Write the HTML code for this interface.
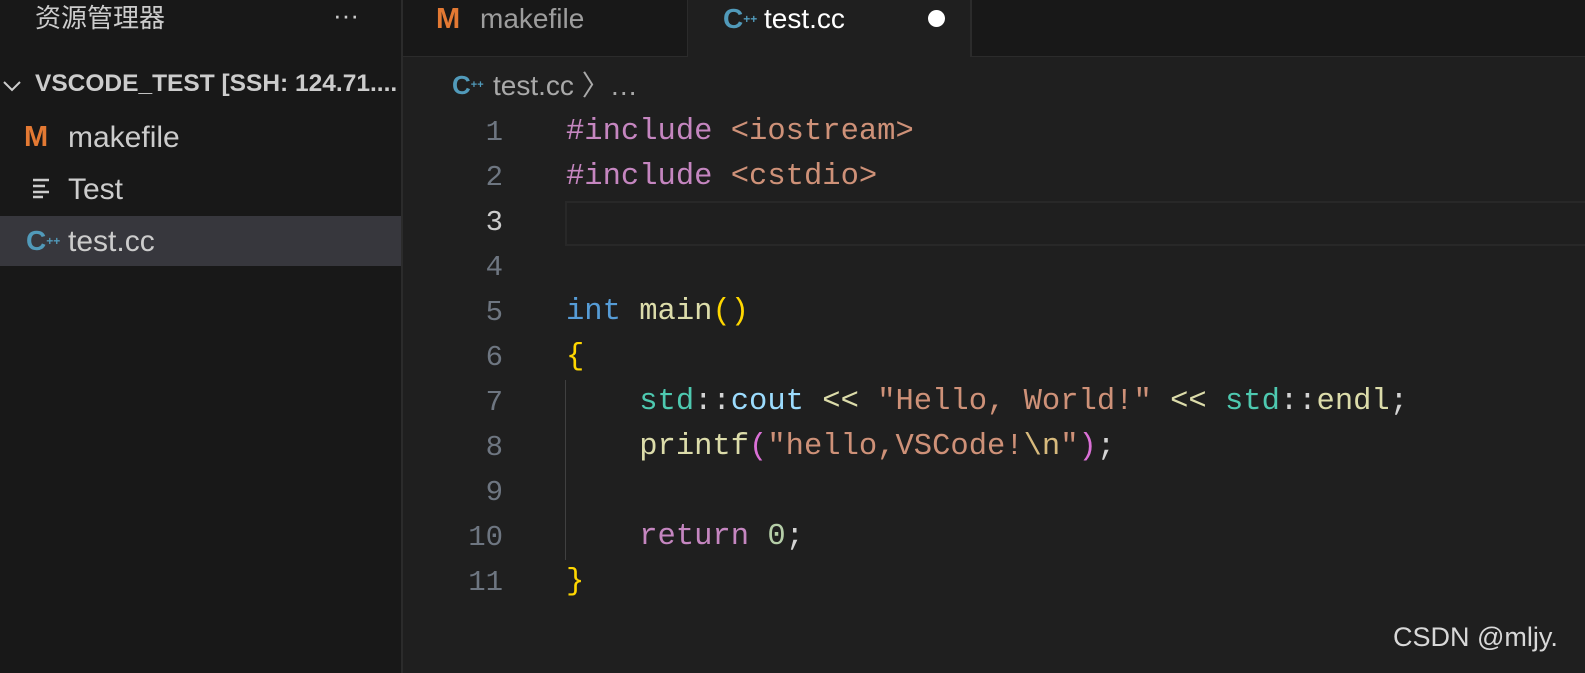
<!DOCTYPE html>
<html><head><meta charset="utf-8"><style>
body{margin:0;width:1585px;height:673px;background:#1f1f1f;overflow:hidden;position:relative;font-family:"Liberation Sans","Noto Sans CJK SC",sans-serif;}
.side{position:absolute;left:0;top:0;width:401px;height:673px;background:#181818;border-right:2px solid #2b2b2b;}
.tabs{position:absolute;left:403px;top:0;right:0;height:56px;background:#181818;border-bottom:1px solid #2b2b2b;}
.tab{position:absolute;top:0;height:56px;color:#9d9d9d;font-size:28px;line-height:38px;}
.abs{position:absolute;}
.code{position:absolute;left:566px;top:0;font-family:"Liberation Mono",monospace;font-size:30.5px;color:#d4d4d4;white-space:pre;}
.ln{position:absolute;left:420px;width:83px;text-align:right;font-family:"Liberation Mono",monospace;font-size:29px;color:#6e7681;}
.l{position:absolute;height:45px;line-height:45px;}
.p{color:#c586c0}.s{color:#ce9178}.k{color:#569cd6}.f{color:#dcdcaa}.g{color:#ffd700}.m{color:#da70d6}.t{color:#4ec9b0}.v{color:#9cdcfe}.n{color:#b5cea8}.e{color:#d7ba7d}
</style></head><body>
<div class="side">
  <div class="abs" style="left:35px;top:0;color:#cccccc;font-size:26px;line-height:36px;">资源管理器</div>
  <div class="abs" style="left:333px;top:0;color:#cccccc;font-size:26px;line-height:30px;">···</div>
  <svg class="abs" style="left:2px;top:76px" width="22" height="20"><path d="M2 6 L10 14 L18 6" stroke="#ccc" stroke-width="2" fill="none"/></svg>
  <div class="abs" style="left:35px;top:69px;color:#cccccc;font-size:24.5px;font-weight:bold;line-height:30px;">VSCODE_TEST [SSH: 124.71....</div>
  <div class="abs" style="left:24px;top:119px;color:#e37933;font-size:29px;font-weight:bold;line-height:36px;">M</div>
  <div class="abs" style="left:68px;top:120px;color:#cccccc;font-size:30px;line-height:36px;">makefile</div>
  <svg class="abs" style="left:32px;top:177px" width="22" height="22"><path d="M1 3H17M1 9H13M1 15H17M1 20H11" stroke="#ccc" stroke-width="2.5"/></svg>
  <div class="abs" style="left:68px;top:172px;color:#cccccc;font-size:30px;line-height:36px;">Test</div>
  <div class="abs" style="left:0;top:216px;width:401px;height:50px;background:#37373d;"></div>
  <div class="abs" style="left:26px;top:226px;color:#519aba;font-size:28px;font-weight:bold;line-height:30px;">C<span style="font-size:12px;vertical-align:top">++</span></div>
  <div class="abs" style="left:68px;top:224px;color:#cccccc;font-size:30px;line-height:36px;">test.cc</div>
</div>
<div class="tabs">
  <div class="tab" style="left:0;width:284px;border-right:1px solid #2b2b2b;">
    <span class="abs" style="left:33px;top:0;color:#e37933;font-weight:bold;font-size:29px;">M</span>
    <span class="abs" style="left:77px;top:0;">makefile</span>
  </div>
  <div class="tab" style="left:285px;width:282px;height:57px;background:#1f1f1f;border-right:2px solid #2b2b2b;color:#ffffff;">
    <span class="abs" style="left:35px;top:0;color:#519aba;font-weight:bold;font-size:28px;">C<span style="font-size:12px;vertical-align:top">++</span></span>
    <span class="abs" style="left:76px;top:0;">test.cc</span>
    <span class="abs" style="left:240px;top:10px;width:17px;height:17px;border-radius:50%;background:#fff;"></span>
  </div>
</div>
<div class="abs" style="left:452px;top:70px;color:#519aba;font-weight:bold;font-size:26px;line-height:30px;">C<span style="font-size:11px;vertical-align:top">++</span></div>
<div class="abs" style="left:493px;top:68px;color:#a9a9a9;font-size:28px;line-height:36px;">test.cc 〉…</div>
<div class="abs" style="left:565px;top:201px;width:1030px;height:41px;border:2px solid #282828;"></div>
<div class="abs" style="left:565px;top:380px;width:1px;height:180px;background:#404040;"></div>
<div class="ln">
<div class="l" style="top:110px;right:0">1</div><div class="l" style="top:155px;right:0">2</div><div class="l" style="top:200px;right:0;color:#cccccc">3</div><div class="l" style="top:245px;right:0">4</div><div class="l" style="top:290px;right:0">5</div><div class="l" style="top:335px;right:0">6</div><div class="l" style="top:380px;right:0">7</div><div class="l" style="top:425px;right:0">8</div><div class="l" style="top:470px;right:0">9</div><div class="l" style="top:515px;right:0">10</div><div class="l" style="top:560px;right:0">11</div>
</div>
<div class="code">
<div class="l" style="top:110px"><span class="p">#include</span> <span class="s">&lt;iostream&gt;</span></div>
<div class="l" style="top:155px"><span class="p">#include</span> <span class="s">&lt;cstdio&gt;</span></div>
<div class="l" style="top:290px"><span class="k">int</span> <span class="f">main</span><span class="g">()</span></div>
<div class="l" style="top:335px"><span class="g">{</span></div>
<div class="l" style="top:380px">    <span class="t">std</span>::<span class="v">cout</span> <span class="f">&lt;&lt;</span> <span class="s">"Hello, World!"</span> <span class="f">&lt;&lt;</span> <span class="t">std</span>::<span class="f">endl</span>;</div>
<div class="l" style="top:425px">    <span class="f">printf</span><span class="m">(</span><span class="s">"hello,VSCode!</span><span class="e">\n</span><span class="s">"</span><span class="m">)</span>;</div>
<div class="l" style="top:515px">    <span class="p">return</span> <span class="n">0</span>;</div>
<div class="l" style="top:560px"><span class="g">}</span></div>
</div>
<div class="abs" style="left:1393px;top:621px;color:#d8d8d8;font-size:27px;line-height:32px;">CSDN @mljy.</div>
</body></html>
